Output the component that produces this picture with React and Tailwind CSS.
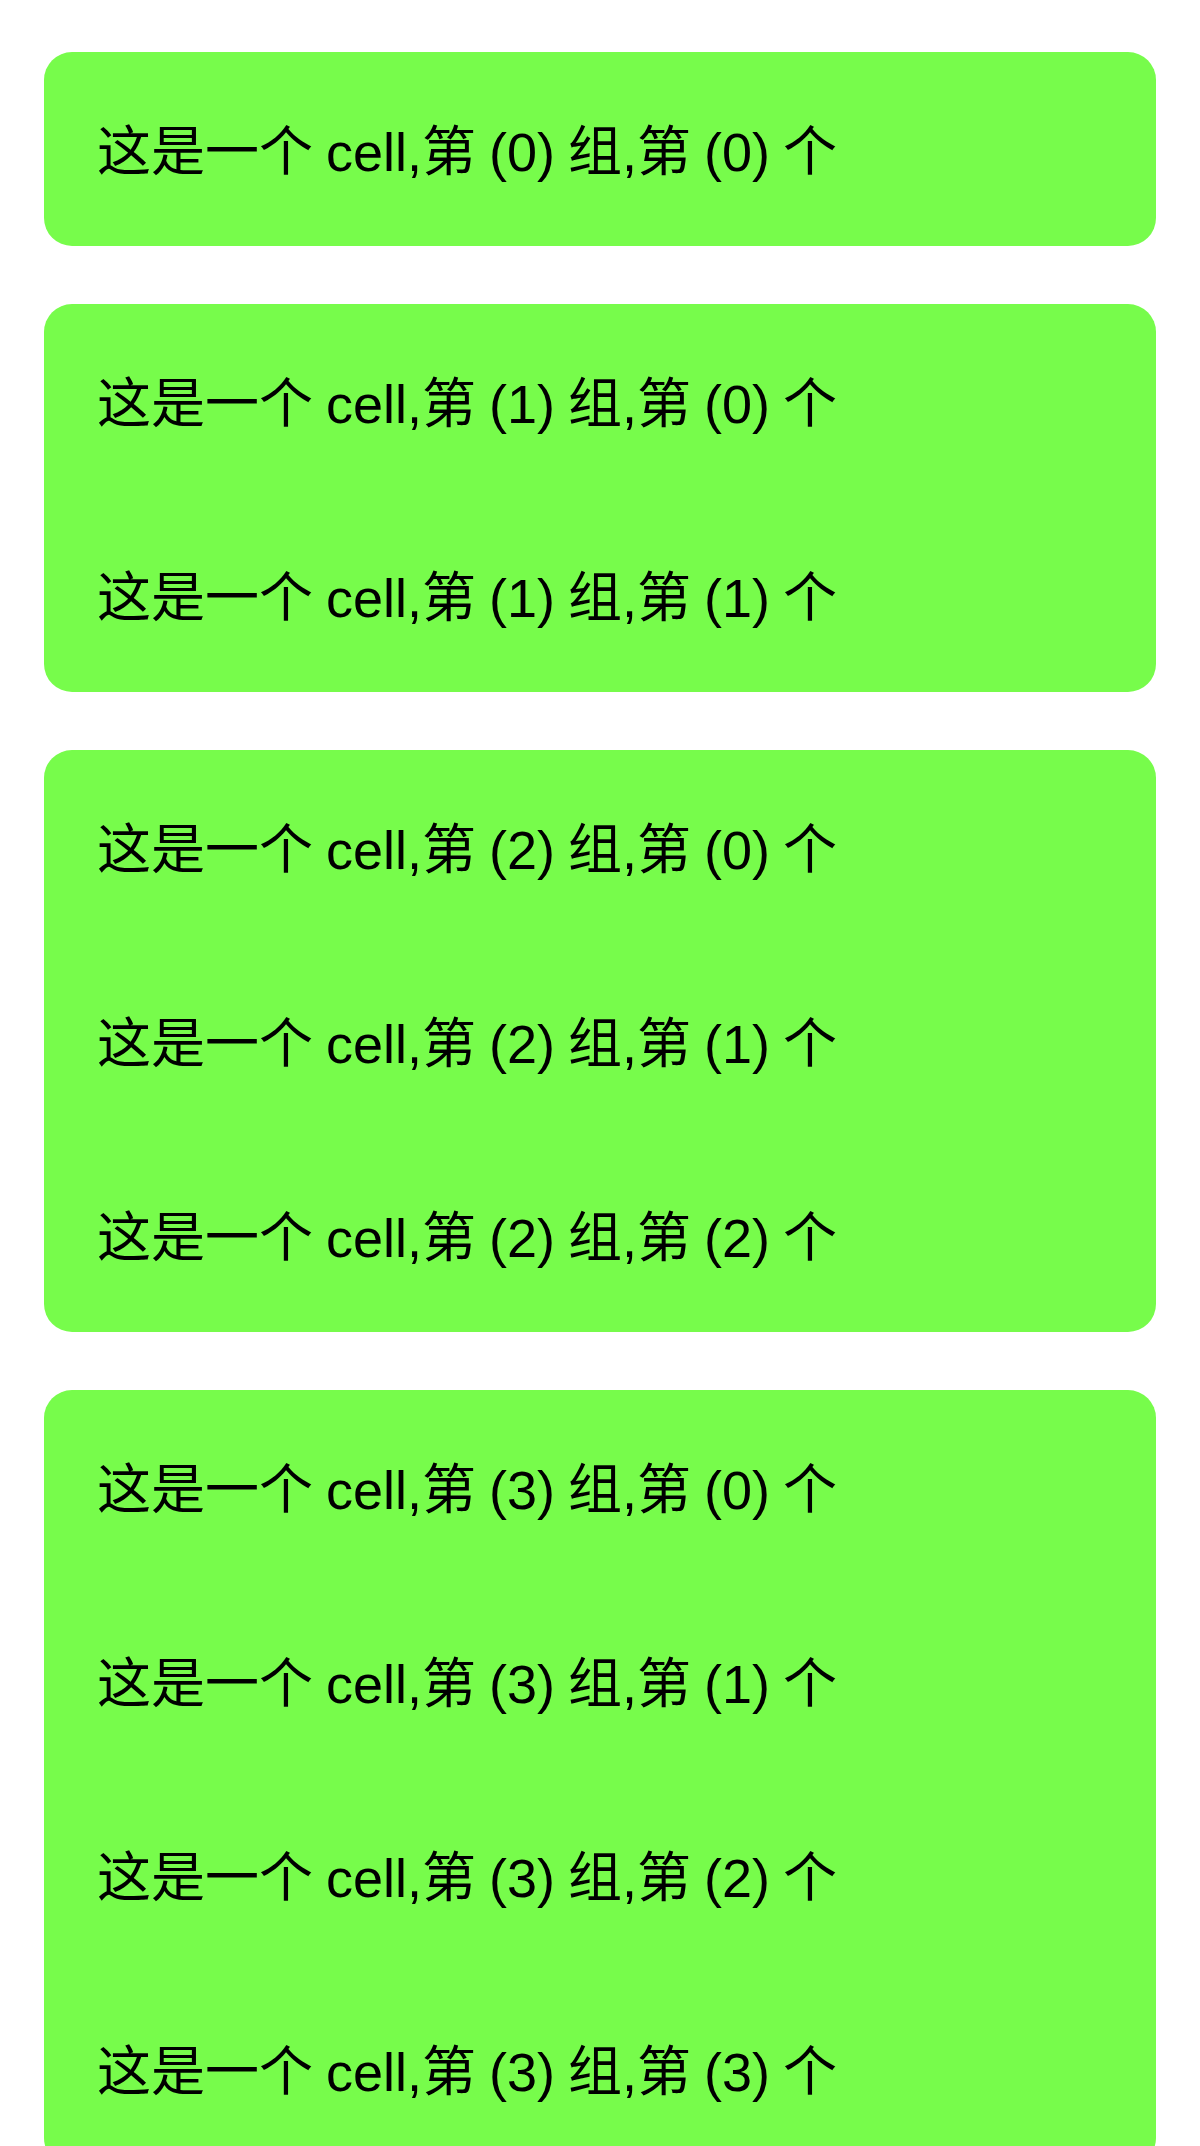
import React from "react";

const groups = [1, 2, 3, 4];

export default function App() {
  return (
    <div
      className="h-[2146px] w-[1200px] overflow-hidden bg-white"
      style={{ fontFamily: '"Liberation Sans", "Noto Sans CJK SC", sans-serif' }}
    >
      <div className="flex flex-col gap-[58px] px-[44px] pt-[52px]">
        {groups.map((count, g) => (
          <div key={g} className="flex flex-col rounded-[28px] bg-[#77fc4b]">
            {Array.from({ length: count }).map((_, i) => (
              <div
                key={i}
                className="flex h-[194px] items-center pl-[53px] pt-[5px] text-[54px] leading-none text-black [word-spacing:-2px]"
              >
                这是一个 cell,第 ({g}) 组,第 ({i}) 个
              </div>
            ))}
          </div>
        ))}
      </div>
    </div>
  );
}
